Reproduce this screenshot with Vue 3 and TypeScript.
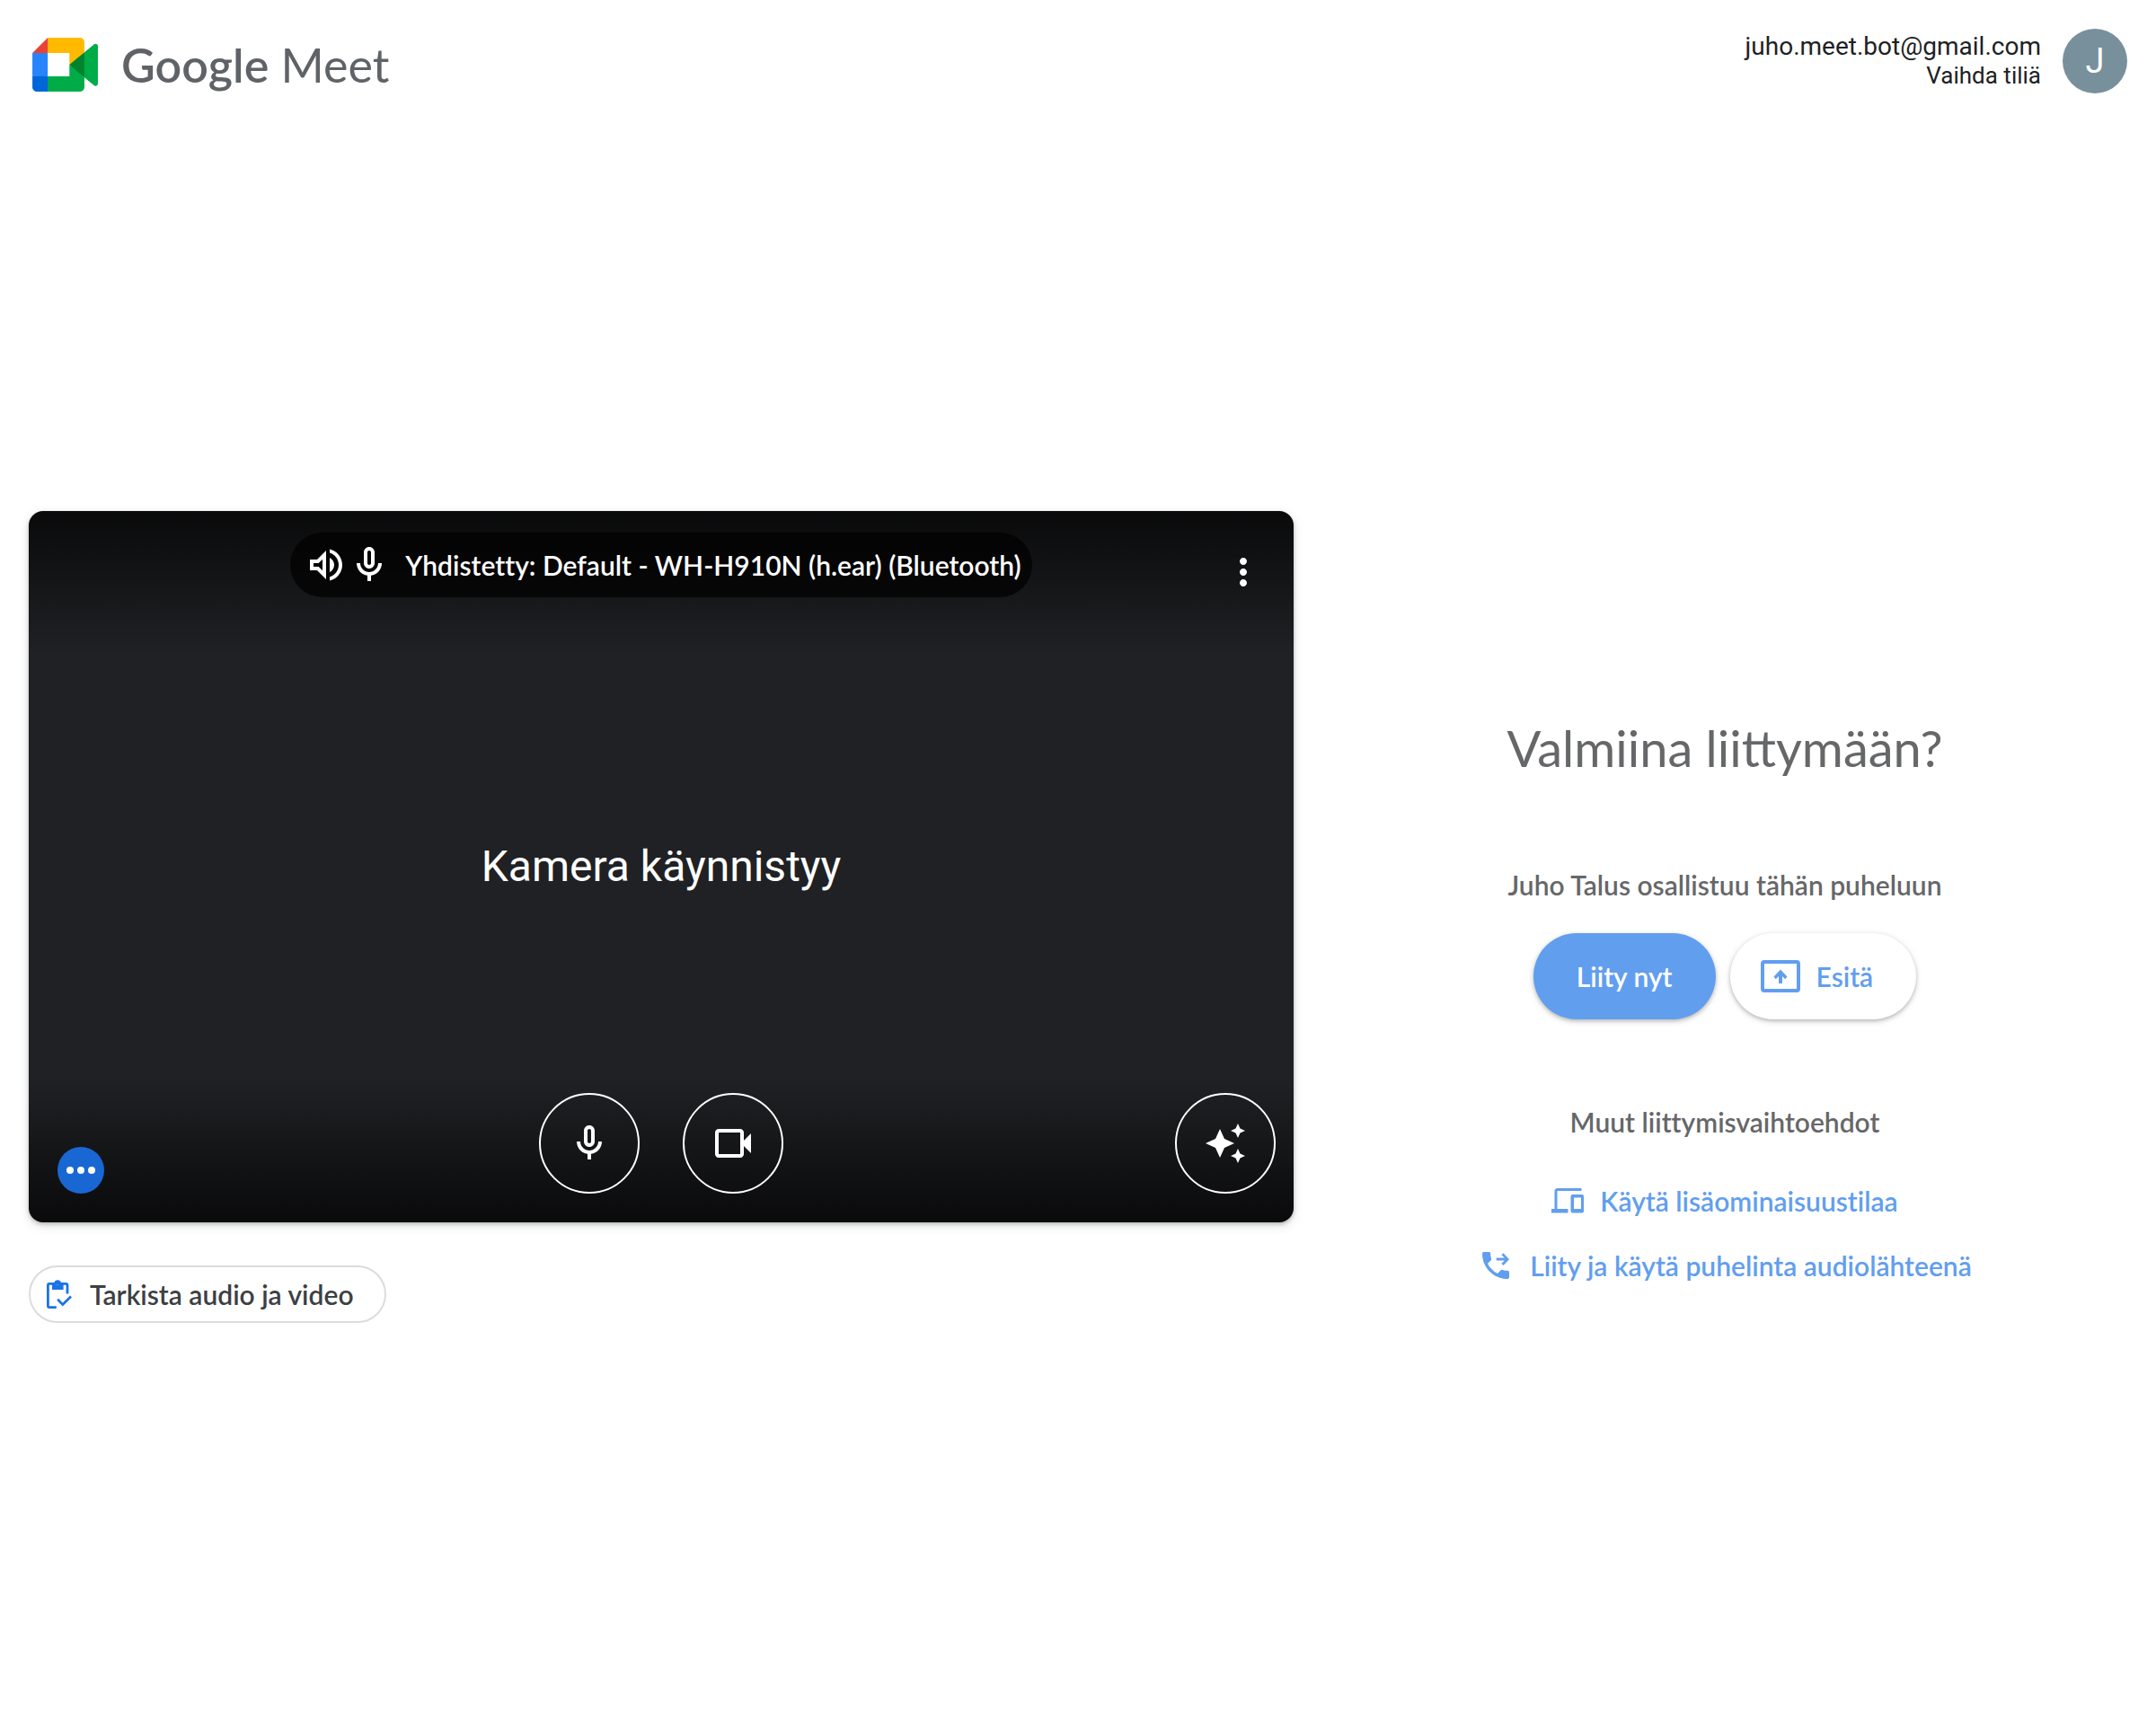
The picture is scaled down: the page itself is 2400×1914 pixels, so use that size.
<script setup lang="ts">
const account = { email: 'juho.meet.bot@gmail.com', initial: 'J' }
const connectedDevice = 'Yhdistetty: Default - WH-H910N (h.ear) (Bluetooth)'

const icons = {
  mic: 'M12 14c1.66 0 3-1.34 3-3V5c0-1.66-1.34-3-3-3S9 3.34 9 5v6c0 1.66 1.34 3 3 3zm-1-9c0-.55.45-1 1-1s1 .45 1 1v6c0 .55-.45 1-1 1s-1-.45-1-1V5zm6 6c0 2.76-2.24 5-5 5s-5-2.24-5-5H5c0 3.53 2.61 6.43 6 6.92V21h2v-3.08c3.39-.49 6-3.39 6-6.92h-2z',
  speaker: 'M3 9v6h4l5 5V4L7 9H3zm7-.17v6.34L7.83 13H5v-2h2.83L10 8.83zM16.5 12c0-1.77-1.02-3.29-2.5-4.03v8.05c1.48-.73 2.5-2.25 2.5-4.02zM14 3.23v2.06c2.89.86 5 3.54 5 6.71s-2.11 5.85-5 6.71v2.06c4.01-.91 7-4.49 7-8.77s-2.99-7.86-7-8.77z',
  camera: 'M18 10.48V6c0-1.1-.9-2-2-2H4c-1.1 0-2 .9-2 2v12c0 1.1.9 2 2 2h12c1.1 0 2-.9 2-2v-4.480l4 3.980v-11l-4 3.980zM16 18H4V6h12v12z',
  effects: 'M19 9l1.25-2.75L23 5l-2.75-1.25L19 1l-1.25 2.75L15 5l2.75 1.25L19 9zm-7.5.5L9 4 6.5 9.5 1 12l5.5 2.5L9 20l2.5-5.5L17 12l-5.5-2.5zM19 15l-1.25 2.75L15 19l2.75 1.25L19 23l1.25-2.75L23 19l-2.75-1.25L19 15z',
  more: 'M12 8c1.1 0 2-.9 2-2s-.9-2-2-2-2 .9-2 2 .9 2 2 2zm0 2c-1.1 0-2 .9-2 2s.9 2 2 2 2-.9 2-2-.9-2-2-2zm0 6c-1.1 0-2 .9-2 2s.9 2 2 2 2-.9 2-2-.9-2-2-2z',
  phone: 'M20 15.5c-1.25 0-2.45-.2-3.57-.57-.35-.11-.74-.03-1.02.24l-2.2 2.2c-2.83-1.44-5.15-3.75-6.59-6.59l2.2-2.21c.28-.26.36-.65.25-1C8.7 6.45 8.5 5.25 8.5 4c0-.55-.45-1-1-1H4c-.55 0-1 .45-1 1 0 9.39 7.61 17 17 17 .55 0 1-.45 1-1v-3.5c0-.55-.45-1-1-1z',
}
</script>

<template>
  <div class="page">
    <header class="header">
      <div class="brand">
        <svg class="brand-mark" viewBox="0 0 87.5 72" aria-hidden="true">
          <path fill="#00832d" d="M49.5 36l8.53 9.75 11.47 7.33 2-17.02-2-16.64-11.69 6.44z" />
          <path fill="#0066da" d="M0 51.5V66c0 3.315 2.685 6 6 6h14.5l3-10.96-3-9.54-9.95-3z" />
          <path fill="#e94235" d="M20.5 0L0 20.5l10.55 3 9.95-3 2.95-9.41z" />
          <path fill="#2684fc" d="M20.5 20.5H0v31h20.5z" />
          <path fill="#00ac47" d="M82.6 8.68L69.5 19.42v33.66l13.16 10.79c1.97 1.54 4.85.135 4.85-2.37V11c0-2.535-2.945-3.925-4.91-2.32zM49.5 36v15.5h-29V72h43c3.315 0 6-2.685 6-6V53.08z" />
          <path fill="#ffba00" d="M63.5 0h-43v20.5h29V36l20-16.57V6c0-3.315-2.685-6-6-6z" />
        </svg>
        <span class="brand-name"><span class="brand-google">Google</span> Meet</span>
      </div>
      <div class="account">
        <div class="account-text">
          <span class="email">{{ account.email }}</span>
          <a class="switch" href="#">Vaihda tiliä</a>
        </div>
        <button class="avatar" type="button" aria-label="Google-tili">{{ account.initial }}</button>
      </div>
    </header>

    <main class="lobby">
      <section class="preview">
        <div class="video">
          <div class="video-top">
            <div class="device-pill">
              <svg class="icon" viewBox="0 0 24 24" aria-hidden="true"><path :d="icons.speaker" /></svg>
              <svg class="icon" viewBox="0 0 24 24" aria-hidden="true"><path :d="icons.mic" /></svg>
              <span class="device-name">{{ connectedDevice }}</span>
            </div>
            <button class="menu" type="button" aria-label="Lisää vaihtoehtoja">
              <svg class="icon" viewBox="0 0 24 24" aria-hidden="true"><path :d="icons.more" /></svg>
            </button>
          </div>
          <p class="status">Kamera käynnistyy</p>
          <div class="video-bottom">
            <span class="level">
              <svg viewBox="0 0 52 52" aria-hidden="true">
                <circle cx="14" cy="26" r="4" /><circle cx="26" cy="26" r="4" /><circle cx="38" cy="26" r="4" />
              </svg>
            </span>
            <div class="toggles">
              <button class="round" type="button" aria-label="Mikrofoni">
                <svg class="icon" viewBox="0 0 24 24" aria-hidden="true"><path :d="icons.mic" /></svg>
              </button>
              <button class="round" type="button" aria-label="Kamera">
                <svg class="icon" viewBox="0 0 24 24" aria-hidden="true"><path :d="icons.camera" /></svg>
              </button>
            </div>
            <button class="round effects" type="button" aria-label="Tehosteet">
              <svg class="icon" viewBox="0 0 24 24" aria-hidden="true"><path :d="icons.effects" /></svg>
            </button>
          </div>
        </div>
        <button class="check" type="button">
          <svg class="check-icon" viewBox="0 0 28 32" aria-hidden="true">
            <path fill="none" stroke="#1a73e8" stroke-width="2.8" d="M10.8 30.6H3a1.6 1.6 0 0 1-1.6-1.6V6A1.6 1.6 0 0 1 3 4.4h18.4A1.6 1.6 0 0 1 23 6v9.5" />
            <path fill="#1a73e8" fill-rule="evenodd" d="M6 3h2.400a4 4 0 0 1 7.600 0h2.600v8H6zM12.200 2.900a1.500 1.500 0 1 0 0 3 1.500 1.500 0 0 0 0-3z" />
            <path fill="none" stroke="#1a73e8" stroke-width="2.8" d="M12.2 21.8l5.6 5.8 9.2-9" />
          </svg>
          Tarkista audio ja video
        </button>
      </section>

      <section class="join">
        <h1 class="title">Valmiina liittymään?</h1>
        <p class="participant">Juho Talus osallistuu tähän puheluun</p>
        <div class="actions">
          <button class="pill primary" type="button">Liity nyt</button>
          <button class="pill secondary" type="button">
            <svg class="present-icon" viewBox="0 0 44 36" aria-hidden="true">
              <rect x="2" y="2" width="40" height="32" rx="2" fill="none" stroke="currentColor" stroke-width="4" />
              <path fill="currentColor" d="M20 26v-8l-3.200 3.200L14.500 18.500 22 10.500l7.500 8-2.300 2.700L24 18v8z" />
            </svg>
            Esitä
          </button>
        </div>
        <p class="others">Muut liittymisvaihtoehdot</p>
        <a class="option" href="#">
          <svg class="companion-icon" viewBox="0 0 36 28" aria-hidden="true">
            <path fill="none" stroke="currentColor" stroke-width="3" d="M33.500 1.500H6.500A1.500 1.500 0 0 0 5 3v20.500" />
            <path fill="currentColor" d="M0 23h18.500v4.500H0z" />
            <path fill="currentColor" fill-rule="evenodd" d="M23.500 7H34a2 2 0 0 1 2 2v16.500a2 2 0 0 1-2 2H23.500a2 2 0 0 1-2-2V9a2 2 0 0 1 2-2zM25 10.500v12.500h8V10.500z" />
          </svg>
          Käytä lisäominaisuustilaa
        </a>
        <a class="option" href="#">
          <svg class="phone-icon" viewBox="0 0 24 24" aria-hidden="true">
            <path :d="icons.phone" />
            <path d="M12.400 6.900h5.500l-2.100-2 1.300-1.200L21 7.900l-3.900 4.100-1.300-1.200 2.100-2.100h-5.500z" />
          </svg>
          Liity ja käytä puhelinta audiolähteenä
        </a>
      </section>
    </main>
  </div>
</template>

<style>
body {
  margin: 0;
  background: #fff;
}
</style>

<style scoped>
.page {
  display: flex;
  flex-direction: column;
  min-height: 100vh;
  font: 600 30px/40px Lato, "Open Sans", sans-serif;
  font-variant-ligatures: none;
  color: #202124;
}
button {
  font: inherit;
  font-variant-ligatures: none;
  color: inherit;
  border: 0;
  padding: 0;
  margin: 0;
  background: none;
  cursor: pointer;
}
a {
  color: inherit;
  text-decoration: none;
}
h1,
p {
  margin: 0;
}
svg {
  display: block;
  flex: none;
}
.icon {
  width: 48px;
  height: 48px;
  fill: #fff;
}

.header {
  box-sizing: border-box;
  height: 128px;
  padding: 32px 32px 0 36px;
  display: flex;
  justify-content: space-between;
  align-items: flex-start;
}
.brand {
  display: flex;
  align-items: center;
  gap: 26px;
  height: 80px;
}
.brand-mark {
  width: 73px;
  height: 60px;
}
.brand-name {
  font-size: 52px;
  line-height: 72px;
  font-weight: 400;
  color: #5f6368;
}
.brand-google {
  font-weight: 600;
}
.account {
  display: flex;
  align-items: center;
  gap: 24px;
}
.account-text {
  display: flex;
  flex-direction: column;
  align-items: flex-end;
  font: 400 28px/32px Roboto, sans-serif;
}
.switch {
  font-size: 26px;
}
.avatar {
  width: 72px;
  height: 72px;
  border-radius: 50%;
  background: #78909c;
  color: #fff;
  font: 400 38px/72px Roboto, sans-serif;
}

.lobby {
  flex: 1;
  display: grid;
  grid-template-columns: 3fr 2fr;
  align-items: center;
}
.preview {
  padding-left: 32px;
  display: flex;
  flex-direction: column;
  align-items: flex-start;
  gap: 48px;
}
.video {
  box-sizing: border-box;
  width: 100%;
  aspect-ratio: 16 / 9;
  padding: 24px 20px 32px;
  border-radius: 16px;
  background:
    linear-gradient(rgba(0, 0, 0, 0.7), transparent 160px),
    linear-gradient(to top, rgba(0, 0, 0, 0.7), transparent 160px),
    #202124;
  box-shadow: 0 2px 4px rgba(60, 64, 67, 0.3), 0 4px 12px rgba(60, 64, 67, 0.15);
  color: #fff;
  display: grid;
  grid-template-rows: 120px 1fr 112px;
}
.video-top,
.video-bottom {
  display: grid;
  grid-template-columns: 1fr auto 1fr;
}
.video-top {
  align-items: start;
}
.device-pill {
  grid-column: 2;
  height: 72px;
  padding: 0 12px 0 16px;
  border-radius: 36px;
  background: rgba(0, 0, 0, 0.7);
  display: flex;
  align-items: center;
}
.device-name {
  margin-left: 16px;
  white-space: nowrap;
}
.menu {
  justify-self: end;
  margin: 20px 12px 0 0;
}
.status {
  align-self: center;
  text-align: center;
  font: 400 48px/56px Roboto, sans-serif;
}
.video-bottom {
  align-items: end;
}
.level {
  width: 52px;
  height: 52px;
  margin-left: 12px;
  border-radius: 50%;
  background: #1967d2;
  fill: #fff;
}
.toggles {
  display: flex;
  gap: 48px;
}
.round {
  box-sizing: border-box;
  width: 112px;
  height: 112px;
  border: 2px solid #fff;
  border-radius: 50%;
  display: flex;
  align-items: center;
  justify-content: center;
}
.effects {
  justify-self: end;
}
.check {
  box-sizing: border-box;
  height: 64px;
  padding: 0 34px 0 18px;
  border: 2px solid #dadce0;
  border-radius: 32px;
  color: #3c4043;
  display: flex;
  align-items: center;
  gap: 20px;
}
.check-icon {
  width: 28px;
  height: 32px;
}

.join {
  padding-top: 192px;
  display: flex;
  flex-direction: column;
  align-items: center;
  color: #666769;
}
.title {
  font-size: 56px;
  line-height: 64px;
  font-weight: 400;
  font-variant-ligatures: normal;
}
.participant {
  margin-top: 100px;
}
.actions {
  margin-top: 34px;
  display: flex;
  gap: 16px;
}
.pill {
  height: 96px;
  padding: 0 48px;
  border-radius: 48px;
  box-shadow: 0 2px 4px rgba(60, 64, 67, 0.3), 0 2px 8px rgba(60, 64, 67, 0.12);
}
.primary {
  background: #629eee;
  color: #fff;
}
.secondary {
  padding-left: 34px;
  background: #fff;
  color: #629eee;
  display: flex;
  align-items: center;
  gap: 18px;
}
.present-icon {
  width: 44px;
  height: 36px;
}
.others {
  margin-top: 94px;
  margin-bottom: 44px;
}
.option {
  height: 48px;
  display: flex;
  align-items: center;
  gap: 18px;
  color: #629eee;
}
.option + .option {
  margin-top: 24px;
}
.companion-icon {
  width: 36px;
  height: 28px;
}
.phone-icon {
  width: 40px;
  height: 40px;
  fill: currentColor;
}
</style>
